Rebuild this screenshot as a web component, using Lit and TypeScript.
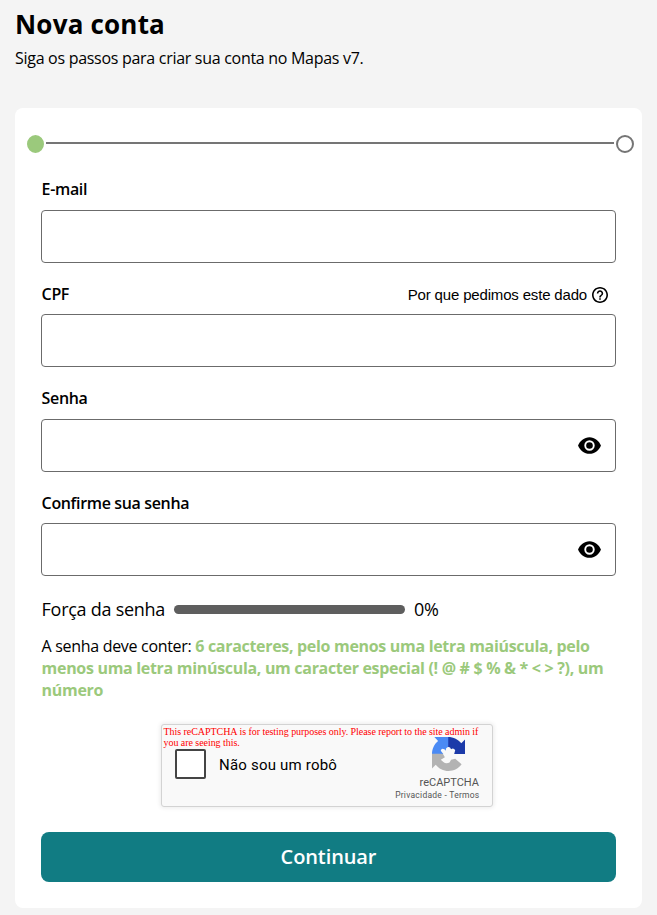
import { LitElement, html, css, svg, nothing } from "lit";
import { customElement, property } from "lit/decorators.js";

@customElement("step-progress")
class StepProgress extends LitElement {
  static styles = css`
    :host { display: flex; align-items: center; gap: 2px; height: 18px; }
    .dot { box-sizing: border-box; width: 18px; height: 18px; border-radius: 50%; border: 2px solid #757575; background: #fff; }
    .dot.active { width: 17px; background: #9bc97c; border-color: #9bc97c; }
    .line { flex: 1; height: 2px; margin-bottom: 2px; background: #757575; }
  `;
  render() {
    return html`<span class="dot active"></span><span class="line"></span><span class="dot"></span>`;
  }
}

@customElement("form-field")
class FormField extends LitElement {
  @property() label = "";
  @property() help = "";
  @property({ type: Boolean }) secret = false;

  static styles = css`
    :host { display: block; height: 104.4px; }
    .head { box-sizing: border-box; display: flex; justify-content: space-between; height: 32px; padding-top: 0.35px; line-height: 22px; font-size: 16px; }
    .label { font-weight: 600; padding-left: 0.6px; letter-spacing: -0.35px; }
    .help { display: flex; align-items: center; gap: 5px; height: 22px; margin: 1px 8px 0 0; font: 15px/22px "Liberation Sans", Arial, sans-serif; letter-spacing: -0.17px; }
    .box { box-sizing: border-box; display: flex; align-items: center; justify-content: flex-end; height: 53px; padding-right: 13px; border: 1px solid #6b6b6b; border-radius: 4px; background: #fff; }
    svg { display: block; }
  `;
  render() {
    return html`
      <div class="head">
        <span class="label">${this.label}</span>
        ${this.help
          ? html`<span class="help">${this.help}
              <svg width="16" height="16" viewBox="2 2 20 20"><path d="M11 18h2v-2h-2v2zm1-16C6.48 2 2 6.48 2 12s4.48 10 10 10 10-4.48 10-10S17.52 2 12 2zm0 18c-4.41 0-8-3.59-8-8s3.590-8 8-8 8 3.590 8 8-3.590 8-8 8zm0-14c-2.210 0-4 1.790-4 4h2c0-1.100.9-2 2-2s2 .9 2 2c0 2-3 1.750-3 5h2c0-2.250 3-2.500 3-5 0-2.210-1.790-4-4-4z"/></svg></span>`
          : nothing}
      </div>
      <div class="box">
        ${this.secret
          ? html`<svg width="25" height="25" viewBox="0 0 24 24"><path d="M12 4C7 4 2.730 7.500 1 12c1.730 4.500 6 8 11 8s9.270-3.500 11-8c-1.730-4.500-6-8-11-8zm0 13a5 5 0 1 1 0-10 5 5 0 0 1 0 10zm0-8.200a3.200 3.200 0 1 0 0 6.400 3.200 3.200 0 0 0 0-6.400z"/></svg>`
          : nothing}
      </div>`;
  }
}

@customElement("captcha-box")
class CaptchaBox extends LitElement {
  static styles = css`
    :host { box-sizing: border-box; position: relative; display: flex; width: 332px; height: 83px; border: 1px solid #d3d3d3; border-radius: 3px; background: #f9f9f9; box-shadow: 0 0 4px 1px rgba(0, 0, 0, 0.08); font-family: Roboto, sans-serif; }
    .warning { position: absolute; z-index: 1; top: 1.5px; left: 1.5px; font: 10px/11px "Liberation Serif", serif; letter-spacing: -0.05px; color: #f00; white-space: nowrap; }
    .check { box-sizing: border-box; width: 31px; height: 30px; margin: 24px 0 0 13px; border: 2px solid #444; border-radius: 2px; background: #fff; }
    .text { margin: 30px 0 0 13px; font-size: 15px; line-height: 20px; letter-spacing: 0.2px; }
    .brand { margin: 12px 13px 0 auto; display: flex; flex-direction: column; align-items: flex-end; color: #555; }
    .brand svg { display: block; margin-right: 14px; }
    .name { font-size: 11px; line-height: 13px; margin-top: 5px; }
    .links { font-size: 8.5px; line-height: 11px; margin: 1px -0.5px 0 0; letter-spacing: 0.25px; }
  `;
  render() {
    const mark = svg`
      <path fill="#1c3aa9" d="M31 0C42 0 51 4.700 56.800 11.800L64 4.700V32H43L45 25Q42 20 37 23Q35 18 31 19Z"/>
      <path fill="#4a8af4" d="M31.500 0H4.600L11.800 7.300C4.600 13.100 0 22 0 32H22L17 26Q18 20 24 23L27 26Q26 20 31.500 19Z"/>
      <path fill="#b3b3b3" d="M0 31.500V59.300L7.200 52.100C13 59.300 22 63.900 32 63.900C42.300 63.900 51.600 58.900 57.400 51.200L45 41L37 43L34 48Q27 51 22 47L17 43L25 38L21 31.500Z"/>`;
    return html`
      <div class="warning">This reCAPTCHA is for testing purposes only. Please report to the site admin if<br />you are seeing this.</div>
      <span class="check"></span>
      <span class="text">Não sou um robô</span>
      <div class="brand">
        <svg width="33" height="34" viewBox="0 0 64 64" preserveAspectRatio="none">${mark}</svg>
        <span class="name">reCAPTCHA</span>
        <span class="links">Privacidade - Termos</span>
      </div>`;
  }
}

@customElement("app-root")
class AppRoot extends LitElement {
  static styles = css`
    :host { box-sizing: border-box; display: block; height: 915px; padding: 7px 15px; background: #f4f4f4; color: #000; font-family: "Open Sans", "Noto Sans", sans-serif; overflow: hidden; }
    h1 { margin: 0; font-size: 26px; line-height: 35px; font-weight: 700; letter-spacing: 0.2px; }
    .intro { margin: 5px 0 0; font-size: 16px; line-height: 22px; letter-spacing: -0.29px; }
    .card { box-sizing: border-box; height: 800px; margin-top: 39px; padding: 27px 26px 0; border-radius: 8px; background: #fff; }
    step-progress { margin: 0 -18px 25px -14px; }
    .strength { display: flex; align-items: center; gap: 9px; height: 24px; margin: 1px 0 0 0.6px; font-size: 18px; letter-spacing: -0.27px; }
    .bar { width: 231px; height: 9px; margin-top: 1px; border-radius: 5px; background: #5e5e5e; }
    .rules { margin: 14px 0 0 0.6px; font-size: 16px; line-height: 22px; letter-spacing: -0.31px; white-space: nowrap; }
    .rules b { color: #9bc97c; }
    captcha-box { margin: 23px auto 0 120px; }
    button { display: block; width: 100%; height: 50px; margin-top: 25px; padding: 0; border: 0; border-radius: 8px; background: #117c83; color: #fff; font: 600 20px "Open Sans", sans-serif; letter-spacing: -0.1px; }
  `;
  render() {
    return html`
      <h1>Nova conta</h1>
      <p class="intro">Siga os passos para criar sua conta no Mapas v7.</p>
      <main class="card">
        <step-progress></step-progress>
        <form-field label="E-mail"></form-field>
        <form-field label="CPF" help="Por que pedimos este dado"></form-field>
        <form-field label="Senha" secret></form-field>
        <form-field label="Confirme sua senha" secret></form-field>
        <div class="strength"><span>Força da senha</span><span class="bar"></span><span>0%</span></div>
        <p class="rules">A senha deve conter: <b>6 caracteres, pelo menos uma letra maiúscula, pelo<br />menos uma letra minúscula, um caracter especial (! @ # $ % &amp; * &lt; &gt; ?), um<br />número</b></p>
        <captcha-box></captcha-box>
        <button>Continuar</button>
      </main>`;
  }
}
